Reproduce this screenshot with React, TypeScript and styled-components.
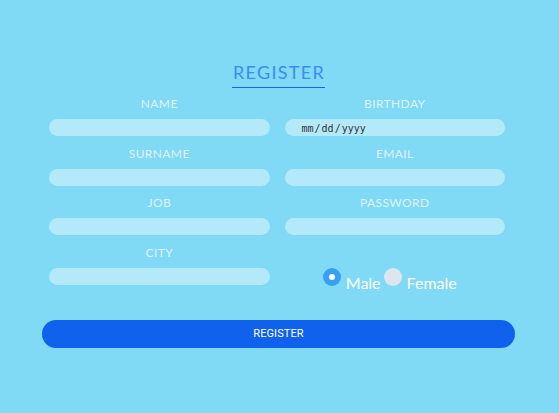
import React from "react";
import styled, { createGlobalStyle } from "styled-components";

const Global = createGlobalStyle`
  html, body { margin: 0; padding: 0; background: #80d9f5; }
  body { font-family: "Lato", "Noto Sans", sans-serif; }
  * { box-sizing: border-box; }
`;

const Page = styled.div`
  min-height: 413px;
  padding: 61px 44px 0 42px;
`;

const Form = styled.form`
  display: flex;
  flex-direction: column;
  align-items: center;
`;

const Title = styled.h1`
  margin: 0 0 9.5px;
  font-family: "Lato", sans-serif;
  font-weight: 400;
  font-size: 18px;
  line-height: 22px;
  letter-spacing: 1.3px;
  color: #3b8df0;
  padding: 0 0 3.5px 1px;
  border-bottom: 1.5px solid #1a62f0;
`;

const Grid = styled.div`
  align-self: stretch;
  display: grid;
  grid-template-columns: 1fr 1fr;
  column-gap: 15px;
  row-gap: 10.6px;
  padding: 0 10px 0 7px;
`;

const Field = styled.div`
  display: flex;
  flex-direction: column;
  gap: 8px;
`;

const Label = styled.label`
  text-align: center;
  font-family: "Lato", sans-serif;
  font-size: 12px;
  line-height: 14px;
  letter-spacing: 0.4px;
  color: #def4fc;
`;

const Input = styled.input`
  height: 17px;
  width: 100%;
  border: none;
  outline: none;
  border-radius: 9px;
  background: #b3e9f9;
  padding: 1px 16px 0;
  font-family: "DejaVu Sans Mono", monospace;
  font-size: 10px;
  color: #333;
  &::-webkit-calendar-picker-indicator { display: none; }
`;

const RadioGroup = styled.div`
  display: flex;
  align-items: flex-start;
  justify-content: center;
  height: 39px;
  padding-top: 22px;
  margin-right: 13px;
  overflow: visible;
`;

const RadioOption = styled.label`
  display: flex;
  align-items: flex-start;
  gap: 5px;
  margin-left: 3px;
  font-family: "Lato", sans-serif;
  font-size: 16px;
  line-height: 18px;
  color: #ffffff;
`;

const Dot = styled.span<{ $checked?: boolean }>`
  width: 18px;
  height: 18px;
  border-radius: 50%;
  flex: none;
  background: ${(p) => (p.$checked ? "#36a0f2" : "#dce6ec")};
  display: flex;
  align-items: center;
  justify-content: center;
  &::after {
    content: "";
    display: ${(p) => (p.$checked ? "block" : "none")};
    width: 6px;
    height: 6px;
    border-radius: 50%;
    background: #fff;
  }
`;

const OptionText = styled.span`
  padding-top: 6px;
`;

const Button = styled.button`
  align-self: stretch;
  margin-top: 35px;
  height: 28px;
  border: none;
  border-radius: 14px;
  background: #1062ec;
  color: #ffffff;
  font-family: "Roboto", sans-serif;
  font-size: 11px;
  letter-spacing: 0.1px;
  cursor: pointer;
`;

export default function App() {
  return (
    <>
      <Global />
      <Page>
        <Form onSubmit={(e) => e.preventDefault()}>
          <Title>REGISTER</Title>
          <Grid>
            <Field>
              <Label>NAME</Label>
              <Input type="text" />
            </Field>
            <Field>
              <Label>BIRTHDAY</Label>
              <Input type="date" />
            </Field>
            <Field>
              <Label>SURNAME</Label>
              <Input type="text" />
            </Field>
            <Field>
              <Label>EMAIL</Label>
              <Input type="email" />
            </Field>
            <Field>
              <Label>JOB</Label>
              <Input type="text" />
            </Field>
            <Field>
              <Label>PASSWORD</Label>
              <Input type="password" />
            </Field>
            <Field>
              <Label>CITY</Label>
              <Input type="text" />
            </Field>
            <RadioGroup>
              <RadioOption>
                <Dot $checked />
                <OptionText>Male</OptionText>
              </RadioOption>
              <RadioOption>
                <Dot />
                <OptionText>Female</OptionText>
              </RadioOption>
            </RadioGroup>
          </Grid>
          <Button type="submit">REGISTER</Button>
        </Form>
      </Page>
    </>
  );
}
